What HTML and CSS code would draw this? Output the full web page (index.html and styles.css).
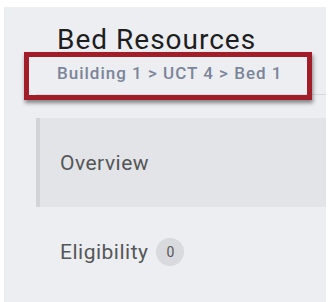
FILE: index.html
```html
<!DOCTYPE html>
<html lang="en">
<head>
  <title>Bed Resources</title>
  <link rel="stylesheet" href="styles.css">
</head>

<body>
  <div class="panel">
    <!-- Header -->
    <div class="header">
      <h1>Bed Resources</h1>
      <div class="crumbs">Building 1 &gt; UCT 4 &gt; Bed 1</div>
    </div>

    <!-- Highlight around the breadcrumb -->
    <div class="highlight"></div>

    <!-- Tabs -->
    <div class="tabs">
      <a href="#overview" class="tab active">Overview</a>
      <a href="#eligibility" class="tab">Eligibility <span class="badge">0</span></a>
    </div>
  </div>
</body>
</html>
```

FILE: styles.css
```css
body {
  margin: 0;
  background-color: white;
  font-family: Roboto, "Liberation Sans", sans-serif;
}

.panel {
  position: relative;
  margin: 7px 2px 0 4px;
  height: 295px;
  padding-top: 18px;
  box-sizing: border-box;
  background-color: #eceef2;
  overflow: hidden;
}

/* Header */
.header {
  margin-left: 32px;
  padding: 0 0 11px 21px;
  border-bottom: 1px solid #d6d8dd;
}

.header h1 {
  margin: 0;
  font-size: 28px;
  line-height: 30px;
  font-weight: normal;
  letter-spacing: 1px;
  color: #1e1e1e;
}

.crumbs {
  margin-top: 8px;
  font-size: 17px;
  line-height: 20px;
  font-weight: 500;
  letter-spacing: 1px;
  color: #7c8598;
}

.highlight {
  position: absolute;
  top: 45px;
  left: 20px;
  width: 288px;
  height: 48px;
  box-sizing: border-box;
  border: 5px solid #a11e28;
  box-shadow: 1px 3px 4px rgba(0, 0, 0, 0.45);
}

/* Tabs */
.tabs {
  margin: 23px 0 0 32px;
  display: flex;
  flex-direction: column;
}

.tab {
  height: 89px;
  padding-left: 24px;
  display: flex;
  align-items: center;
  text-decoration: none;
  font-size: 21px;
  line-height: 20px;
  letter-spacing: 0.5px;
  color: #555658;
}

.tab.active {
  padding-left: 20px;
  border-left: 4px solid #d2d4d8;
  background-color: #e3e4e8;
}

.badge {
  width: 28px;
  height: 28px;
  margin-left: 8px;
  border-radius: 50%;
  display: inline-flex;
  align-items: center;
  justify-content: center;
  background-color: #d9dadd;
  font-size: 14px;
  letter-spacing: 0;
  color: #555658;
}
```
